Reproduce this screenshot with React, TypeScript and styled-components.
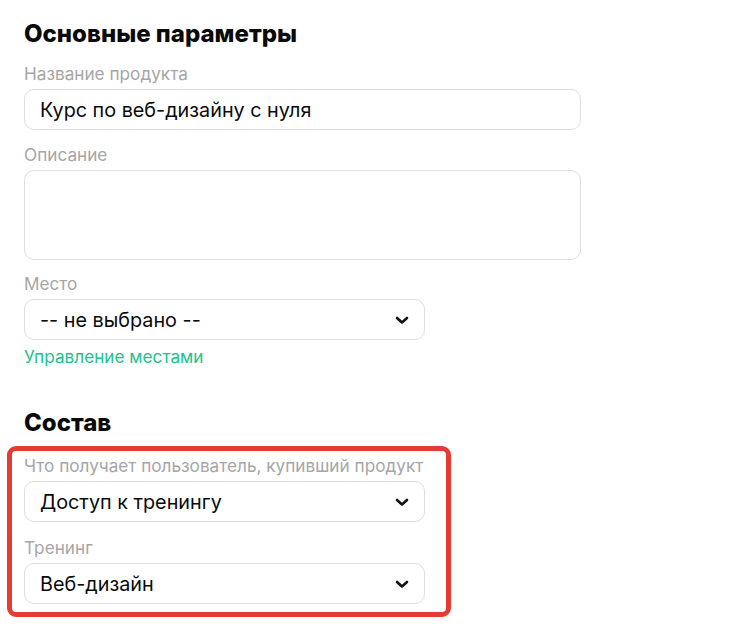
import styled, { createGlobalStyle } from "styled-components";

const GlobalStyle = createGlobalStyle`
    body {
        margin: 0;
        background: #ffffff;
        font-family: Inter, "Noto Sans", sans-serif;
        color: #111111;
    }
`;

const Chevron = () => (
    <svg width="14" height="10" viewBox="0 0 14 10" fill="none">
        <path d="M2 3l5 4.5L12 3" stroke="#111" strokeWidth="2.6" strokeLinecap="round" strokeLinejoin="round" />
    </svg>
);

const Select = ({ value }: { value: string }) => (
    <SelectBox>
        <span>{value}</span>
        <Chevron />
    </SelectBox>
);

const App = () => {
    return (
        <Page>
            <GlobalStyle />
            <Heading>Основные параметры</Heading>
            <Field>
                <Label>Название продукта</Label>
                <Input>Курс по веб-дизайну с нуля</Input>
            </Field>
            <Field>
                <Label>Описание</Label>
                <TextArea />
            </Field>
            <Field>
                <Label>Место</Label>
                <Select value="-- не выбрано --" />
                <Link>Управление местами</Link>
            </Field>

            <Heading $spaced>Состав</Heading>
            <Highlight>
                <Field>
                    <Label>Что получает пользователь, купивший продукт</Label>
                    <Select value="Доступ к тренингу" />
                </Field>
                <Field>
                    <Label>Тренинг</Label>
                    <Select value="Веб-дизайн" />
                </Field>
            </Highlight>
        </Page>
    );
};

const Page = styled.div`
    padding: 19px 0 0 24px;
    width: 557px;
`;

const Heading = styled.h2<{ $spaced?: boolean }>`
    margin: ${(p) => (p.$spaced ? "41px 0 8px" : "0 0 15px")};
    font-size: 24px;
    line-height: 30px;
    font-weight: 800;
    color: #0a0a0a;
`;

const Field = styled.div`
    display: flex;
    flex-direction: column;
    margin-bottom: 14.5px;
`;

const Label = styled.div`
    font-size: 17.2px;
    line-height: 20px;
    color: #a6a6a6;
    margin-bottom: 5px;
`;

const Input = styled.div`
    box-sizing: border-box;
    height: 41px;
    display: flex;
    align-items: center;
    padding: 0 15px;
    border: 1px solid #dedede;
    border-radius: 10px;
    font-size: 19.8px;
    color: #0a0a0a;
`;

const TextArea = styled(Input)`
    height: 90px;
`;

const SelectBox = styled(Input)`
    width: 401px;
    justify-content: space-between;
    padding-right: 15px;
`;

const Link = styled.a`
    margin-top: 7px;
    font-size: 17.2px;
    line-height: 20px;
    color: #1ec28b;
    cursor: pointer;
`;

const Highlight = styled.div`
    box-sizing: border-box;
    width: 444px;
    margin-left: -17px;
    padding: 5px 21px 0 12px;
    border: 5px solid #e53b33;
    border-radius: 9px;
    & > div {
        margin-bottom: 16px;
    }
    & > div:last-child {
        margin-bottom: 8px;
    }
`;

export default App;
